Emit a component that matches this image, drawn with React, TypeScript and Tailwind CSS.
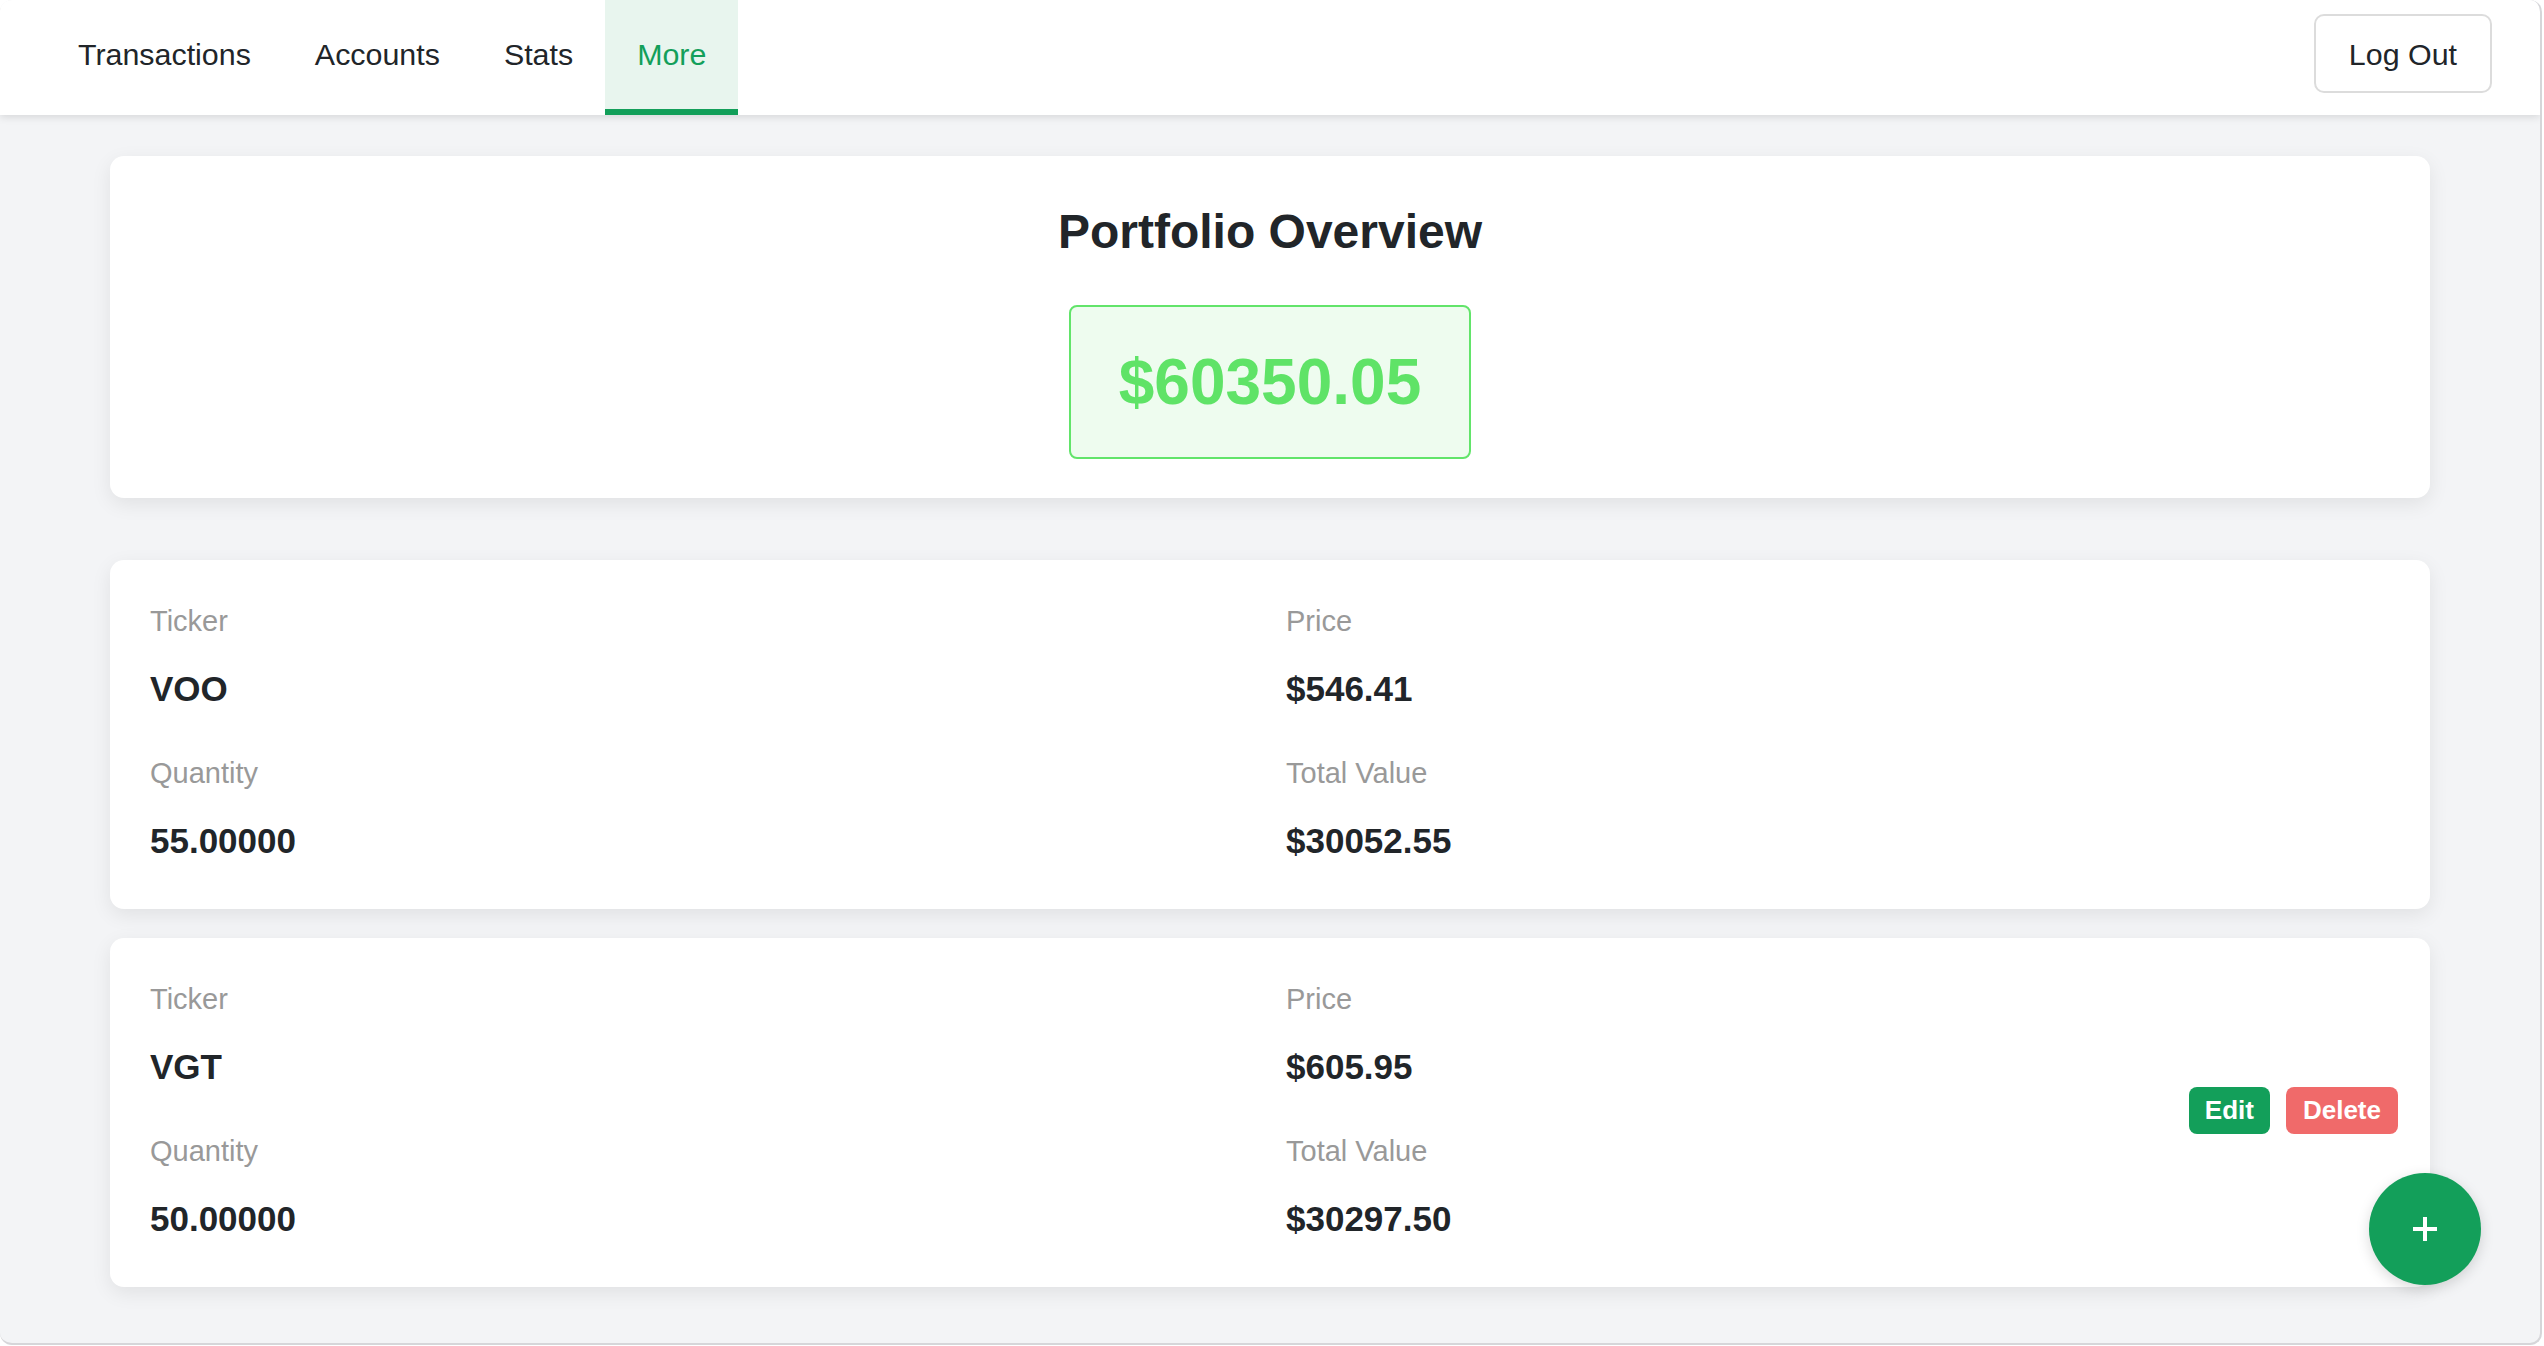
import React from 'react';

interface Holding {
    ticker: string;
    price: string;
    quantity: string;
    total: string;
}

const holdings: Holding[] = [
    { ticker: 'VOO', price: '$546.41', quantity: '55.00000', total: '$30052.55' },
    { ticker: 'VGT', price: '$605.95', quantity: '50.00000', total: '$30297.50' },
];

const tabs = ['Transactions', 'Accounts', 'Stats', 'More'];

function Field({ label, value }: { label: string; value: string }) {
    return (
        <div className="flex flex-col">
            <span className="text-[29px] leading-[43px] text-[#999999]">{label}</span>
            <span className="mt-[20px] text-[35px] leading-[52px] font-bold text-[#212529]">{value}</span>
        </div>
    );
}

function HoldingCard({ holding, showActions }: { holding: Holding; showActions?: boolean }) {
    return (
        <div className="relative w-[2320px] bg-white rounded-[14px] shadow-[0_6px_20px_rgba(0,0,0,0.08)]">
            <div className="grid grid-cols-2 gap-x-8 gap-y-[37px] pt-[40px] pb-[42px] px-[40px]">
                <Field label="Ticker" value={holding.ticker} />
                <Field label="Price" value={holding.price} />
                <Field label="Quantity" value={holding.quantity} />
                <Field label="Total Value" value={holding.total} />
            </div>
            {showActions && (
                <div className="absolute right-[32px] top-[149px] flex gap-4">
                    <button className="px-[16px] py-[8px] rounded-lg bg-[#139f5a] text-white text-[26px] leading-[31px] font-bold">
                        Edit
                    </button>
                    <button className="px-[17px] py-[8px] rounded-lg bg-[#f06a6a] text-white text-[26px] leading-[31px] font-bold">
                        Delete
                    </button>
                </div>
            )}
        </div>
    );
}

export default function App() {
    return (
        <div className="relative w-[2542px] h-[1345px] overflow-hidden bg-[#f3f4f6] rounded-[12px] border-r-2 border-b-2 border-[#d6d6d9] font-['Liberation_Sans',Arial,sans-serif]">
            <nav className="relative z-10 h-[115px] bg-white shadow-[0_2px_8px_rgba(0,0,0,0.12)] flex justify-between pl-[46px] pr-[48px]">
                <div className="flex">
                    {tabs.map((tab) => (
                        <div
                            key={tab}
                            className={
                                tab === 'More'
                                    ? 'flex items-center px-8 border-b-[6px] border-[#139f5a] bg-[#e8f5ee] text-[#139f5a] text-[30.4px]'
                                    : 'flex items-center px-8 border-b-[6px] border-transparent text-[#212529] text-[30.4px]'
                            }
                        >
                            {tab}
                        </div>
                    ))}
                </div>
                <div className="pt-[14px]">
                    <button className="px-[33px] py-[19.5px] border-2 border-[#dcdcdc] rounded-[10px] bg-white text-[30.4px] leading-[36px] text-[#212529]">
                        Log Out
                    </button>
                </div>
            </nav>

            <main className="flex flex-col items-center pt-[41px]">
                <div className="w-[2320px] bg-white rounded-[14px] shadow-[0_6px_20px_rgba(0,0,0,0.08)] pt-[47px] pb-[39px] flex flex-col items-center">
                    <h1 className="text-[48px] leading-[58px] font-bold text-[#212529] mb-[44px]">Portfolio Overview</h1>
                    <div className="px-[48px] py-[37px] border-2 border-[#62e46a] bg-[#eefcef] rounded-lg">
                        <span className="block text-[64px] leading-[76px] font-bold text-[#5fe367]">$60350.05</span>
                    </div>
                </div>

                <div className="mt-[62px]">
                    <HoldingCard holding={holdings[0]} />
                </div>
                <div className="mt-[29px]">
                    <HoldingCard holding={holdings[1]} showActions />
                </div>
            </main>

            <button className="fixed right-[63px] bottom-[61px] w-[112px] h-[112px] rounded-full bg-[#139f5a] flex items-center justify-center shadow-[0_4px_14px_rgba(0,0,0,0.15)]">
                <svg width="24" height="24" viewBox="0 0 24 24">
                    <path d="M12 0v24M0 12h24" stroke="white" strokeWidth="4" />
                </svg>
            </button>
        </div>
    );
}
